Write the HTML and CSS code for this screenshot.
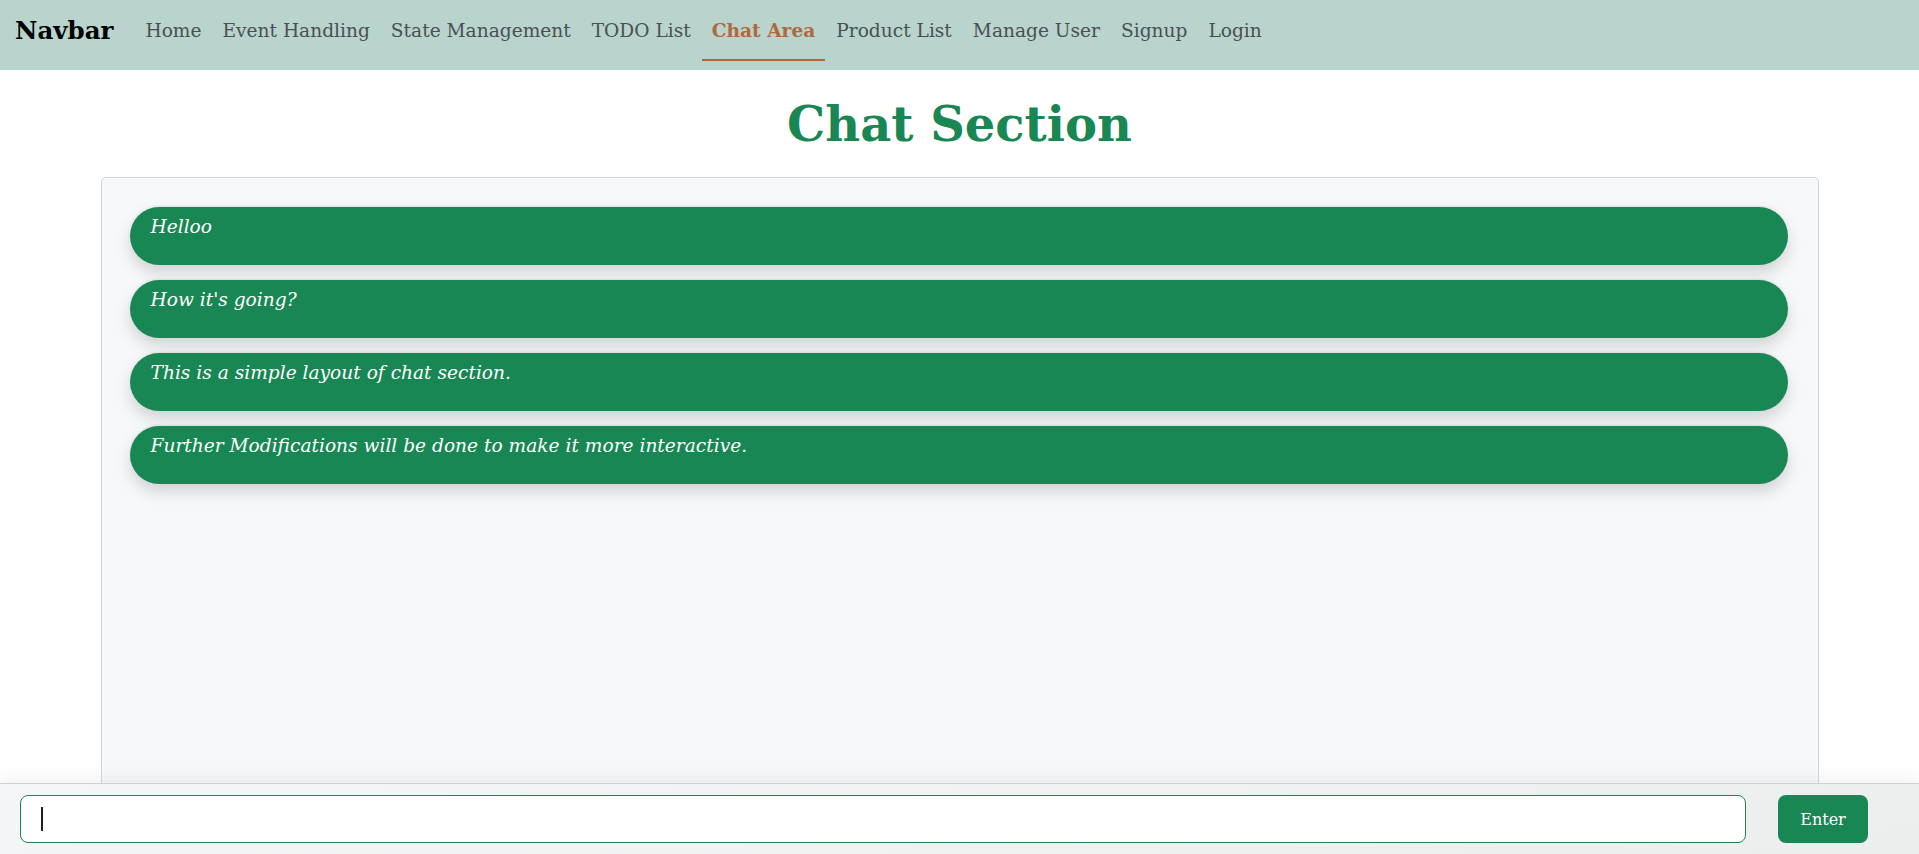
FILE: index.html
```html
<!DOCTYPE html>
<html lang="en">
<head>
<meta charset="utf-8">
<title>Chat Area</title>
<link rel="stylesheet" href="styles.css">
</head>
<body>
<nav class="navbar">
  <a class="brand" href="#">Navbar</a>
  <ul class="nav-links">
    <li><a class="nav-link" href="#">Home</a></li>
    <li><a class="nav-link" href="#">Event Handling</a></li>
    <li><a class="nav-link" href="#">State Management</a></li>
    <li><a class="nav-link" href="#">TODO List</a></li>
    <li><a class="nav-link active" href="#">Chat Area</a></li>
    <li><a class="nav-link" href="#">Product List</a></li>
    <li><a class="nav-link" href="#">Manage User</a></li>
    <li><a class="nav-link" href="#">Signup</a></li>
    <li><a class="nav-link" href="#">Login</a></li>
  </ul>
</nav>
<main class="page">
  <h1 class="title">Chat Section</h1>
  <section class="chat-box">
    <div class="bubble">Helloo</div>
    <div class="bubble">How it's going?</div>
    <div class="bubble">This is a simple layout of chat section.</div>
    <div class="bubble">Further Modifications will be done to make it more interactive.</div>
  </section>
</main>
<footer class="composer">
  <div class="input-wrap">
    <input class="msg-input" type="text" autofocus>
    <span class="caret"></span>
  </div>
  <button class="send-btn" type="button">Enter</button>
</footer>
</body>
</html>
```
FILE: styles.css
```css
* { box-sizing: border-box; }
html, body { margin: 0; padding: 0; }
body {
  font-family: Georgia, "DejaVu Serif", serif;
  background: #ffffff;
  color: #212529;
}
.navbar {
  height: 70px;
  background: #b8d4cd;
  display: flex;
  align-items: flex-start;
  padding: 16px 0 0 15px;
}
.brand {
  font-weight: bold;
  font-size: 24.5px;
  line-height: 30px;
  color: #000;
  text-decoration: none;
  margin-right: 22px;
}
.nav-links {
  list-style: none;
  margin: 0;
  padding: 0;
  display: flex;
  gap: 1px;
}
.nav-link {
  display: block;
  font-size: 18.6px;
  line-height: 30px;
  padding: 0 10px 13px;
  color: #4b4f52;
  text-decoration: none;
  border-bottom: 2px solid transparent;
}
.nav-link.active {
  color: #b0693a;
  font-weight: bold;
  border-bottom-color: #b0693a;
}
.title {
  margin: 0;
  padding: 22px 0 0;
  height: 107px;
  text-align: center;
  font-size: 48px;
  line-height: 64px;
  font-weight: bold;
  color: #198754;
}
.chat-box {
  width: 1718px;
  margin: 0 auto;
  min-height: 690px;
  background: #f7f8fa;
  border: 1px solid #d3d6da;
  border-radius: 5px;
  padding: 29px 30px 29px 28px;
  display: flex;
  flex-direction: column;
  gap: 15px;
}
.bubble {
  height: 58px;
  background: #198754;
  color: #ffffff;
  border-radius: 29px;
  padding: 5px 21px;
  font-style: italic;
  font-size: 18.6px;
  line-height: 30px;
  box-shadow: 0 0.5rem 1rem rgba(0, 0, 0, 0.15), 0 -1px 2px rgba(0, 0, 0, 0.08);
}
.composer {
  position: fixed;
  left: 0;
  right: 0;
  bottom: 0;
  height: 71px;
  background: linear-gradient(170deg, #f5f6f7 0%, #eceded 100%);
  border-top: 1px solid #cfd1d3;
  box-shadow: 0 -6px 16px rgba(0, 0, 0, 0.05);
  display: flex;
  align-items: center;
  gap: 32px;
  padding: 0 51px 0 20px;
}
.input-wrap {
  position: relative;
  flex: 1;
  display: flex;
}
.msg-input {
  flex: 1;
  height: 48px;
  border: 1px solid #198754;
  border-radius: 8px;
  background: #fff;
  padding: 0 20px;
  font-family: Georgia, "DejaVu Serif", serif;
  font-size: 18px;
  outline: none;
  color: #212529;
}
.caret {
  position: absolute;
  left: 21px;
  top: 12px;
  width: 1.5px;
  height: 24px;
  background: #1e1e1e;
}
.send-btn {
  width: 90px;
  height: 48px;
  border: none;
  border-radius: 8px;
  background: #198754;
  color: #fff;
  font-family: Georgia, "DejaVu Serif", serif;
  font-size: 16px;
}
```
